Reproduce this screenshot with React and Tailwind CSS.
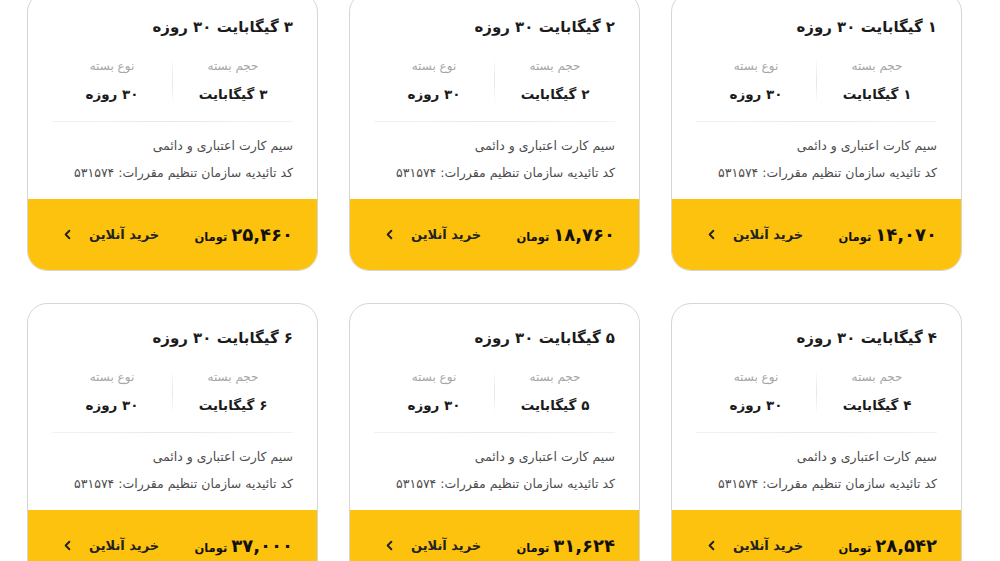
import { ChevronLeft } from "lucide-react";

const plans = [
  { gb: "۱", price: "۱۴,۰۷۰" },
  { gb: "۲", price: "۱۸,۷۶۰" },
  { gb: "۳", price: "۲۵,۴۶۰" },
  { gb: "۴", price: "۲۸,۵۴۲" },
  { gb: "۵", price: "۳۱,۶۲۴" },
  { gb: "۶", price: "۳۷,۰۰۰" },
];

function PlanCard({ gb, price }) {
  return (
    <div className="h-[279px] flex flex-col rounded-[20px] border border-[#d6d6d6] bg-white overflow-hidden">
      <div className="px-6 flex-1">
        {/* Title */}
        <h3 className="mt-[24px] text-[15px] leading-[20px] font-bold text-[#1b1b1b]">
          {gb} گیگابایت ۳۰ روزه
        </h3>

        {/* Specs */}
        <div className="mt-[20px] flex">
          <div className="flex-1 flex flex-col items-center">
            <span className="text-[12px] leading-[18px] text-[#a6a6a6]">حجم بسته</span>
            <span className="mt-[8px] text-[13.5px] leading-[22px] font-bold text-[#1b1b1b]">
              {gb} گیگابایت
            </span>
          </div>
          <div className="w-px bg-linear-to-b from-transparent via-[#e6e6e6] to-transparent" />
          <div className="flex-1 flex flex-col items-center">
            <span className="text-[12px] leading-[18px] text-[#a6a6a6]">نوع بسته</span>
            <span className="mt-[8px] text-[13.5px] leading-[22px] font-bold text-[#1b1b1b]">
              ۳۰ روزه
            </span>
          </div>
        </div>

        <div className="mt-[16px] h-px bg-linear-to-l from-[#f2f2f2] via-[#e8e8e8] to-[#f2f2f2]" />

        {/* Details */}
        <div className="pt-[10px] text-[12.5px] leading-[27px] text-[#4d4d4d]">
          <p>سیم کارت اعتباری و دائمی</p>
          <p>کد تائیدیه سازمان تنظیم مقررات: ۵۳۱۵۷۴</p>
        </div>
      </div>

      {/* Footer */}
      <div className="h-[71px] shrink-0 bg-[#fdc20e] px-6 flex items-center justify-between">
        <div className="flex items-baseline gap-1 text-[#111]">
          <span className="text-[18px] font-bold">{price}</span>
          <span className="text-[11.5px] font-bold">تومان</span>
        </div>
        <button className="flex items-center gap-[14px] pl-2 text-[13px] font-bold text-[#222]">
          <span>خرید آنلاین</span>
          <ChevronLeft size={15} strokeWidth={3} />
        </button>
      </div>
    </div>
  );
}

export default function App() {
  return (
    <div
      dir="rtl"
      className="w-[1000px] h-[561px] overflow-hidden bg-white"
      style={{ fontFamily: '"DejaVu Sans", "Noto Sans", sans-serif' }}
    >
      <div className="-mt-[8px] pr-[38px] pl-[27px] grid grid-cols-3 gap-x-[31px] gap-y-[32px]">
        {plans.map((p) => (
          <PlanCard key={p.gb} {...p} />
        ))}
      </div>
    </div>
  );
}
